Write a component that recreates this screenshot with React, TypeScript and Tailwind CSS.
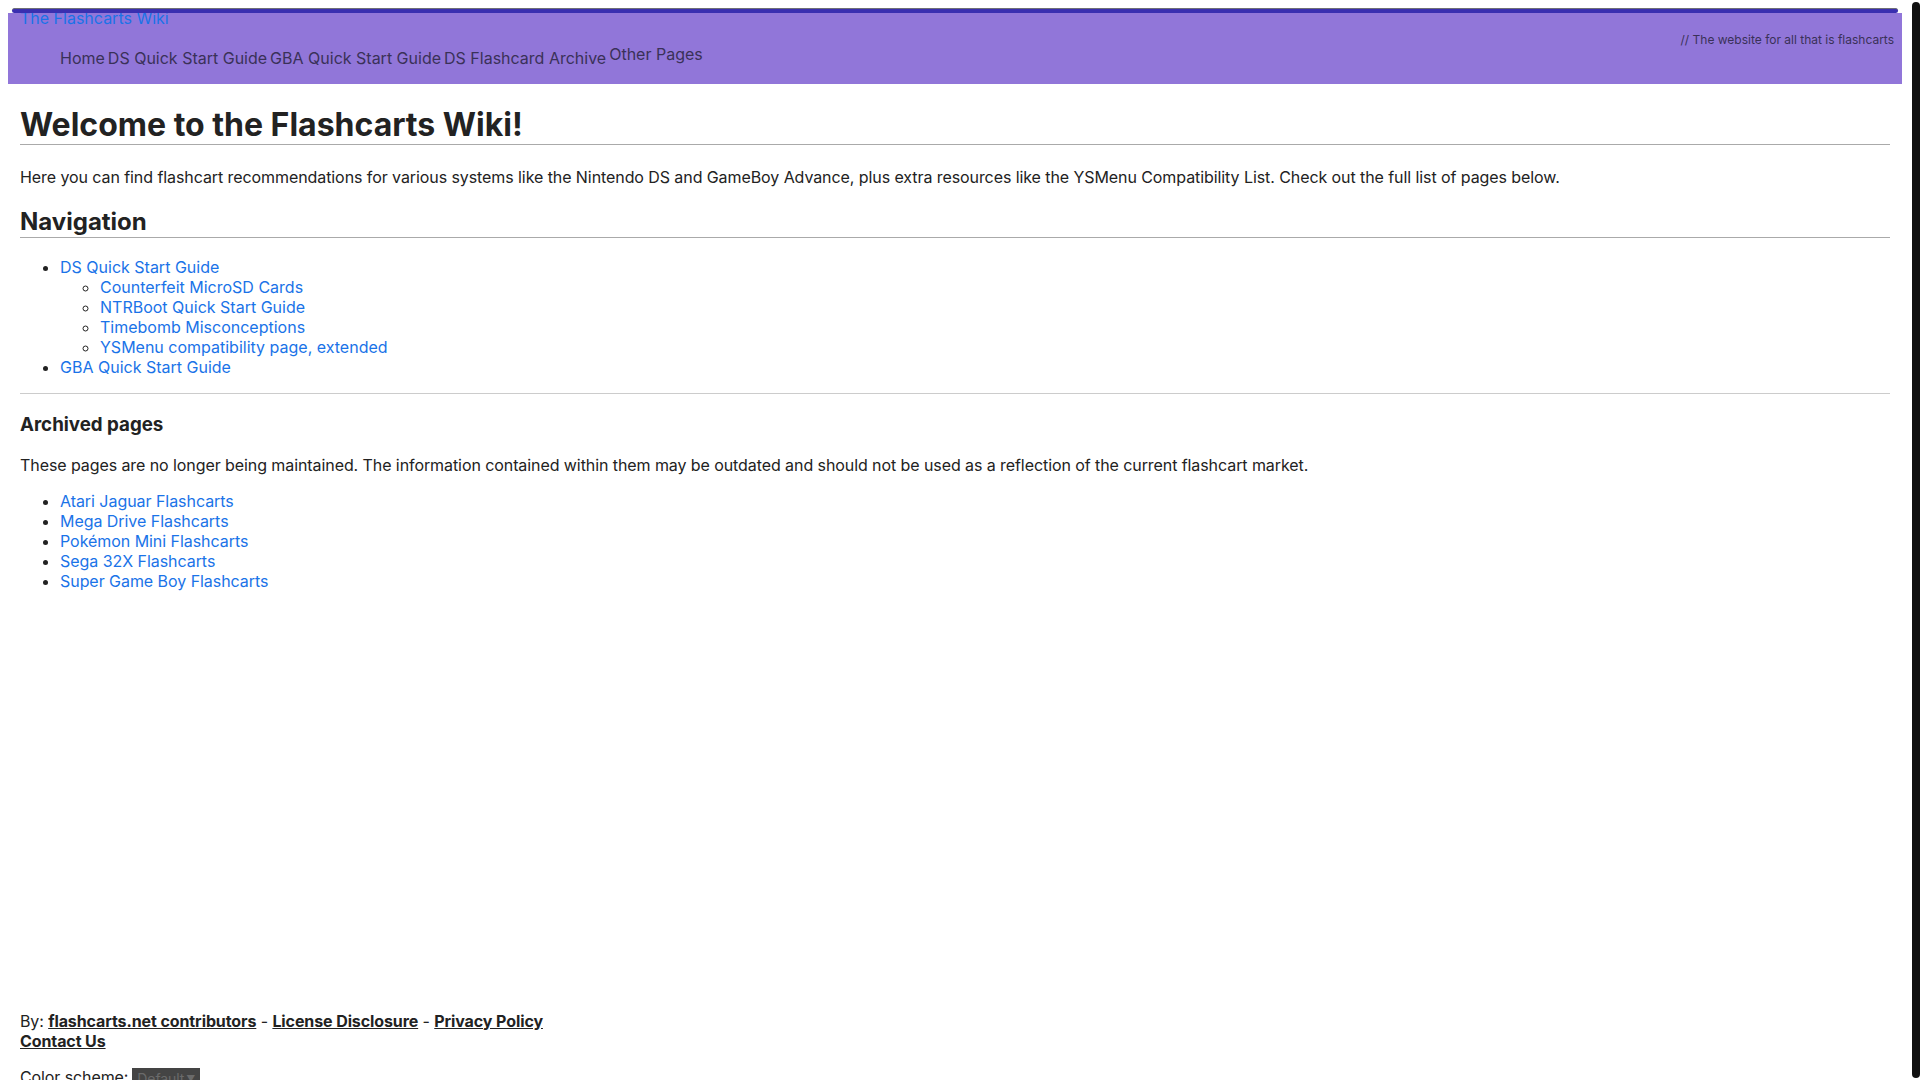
const navLinks = ['Home', 'DS Quick Start Guide', 'GBA Quick Start Guide', 'DS Flashcard Archive'];

const dsPages = [
  'Counterfeit MicroSD Cards',
  'NTRBoot Quick Start Guide',
  'Timebomb Misconceptions',
  'YSMenu compatibility page, extended',
];

const archived = [
  'Atari Jaguar Flashcarts',
  'Mega Drive Flashcarts',
  'Pokémon Mini Flashcarts',
  'Sega 32X Flashcarts',
  'Super Game Boy Flashcarts',
];

function Header() {
  return (
    <header className="ml-2 mr-[10px] mt-2">
      <div className="relative z-10 mx-1 h-[5px] rounded-[3px] border-t border-[#6f6f78] bg-[#3a2fb0]" />
      <div className="flex h-[71px] flex-col bg-[#9176d9] pl-3 pr-2">
        <a href="#" className="-mt-[5px] block text-[16px] leading-5 text-[#1a73e8]">
          The Flashcarts Wiki
        </a>
        <p className="mt-1 text-right text-[12px] leading-4 text-[#3a3158]">
          {'// The website for all that is flashcarts'}
        </p>
        <ul className="-mt-1 flex items-end gap-[3px] pl-10 text-[16px] leading-5 text-[#3a3158]">
          {navLinks.map((l) => (
            <li key={l}>{l}</li>
          ))}
          <li className="mb-1">Other Pages</li>
        </ul>
      </div>
    </header>
  );
}

function Link({ children }: { children: React.ReactNode }) {
  return (
    <a href="#" className="text-[#1a73e8]">
      {children}
    </a>
  );
}

export default function App() {
  return (
    <div
      className="flex h-screen items-start overflow-hidden bg-white text-[16px] text-[#222]"
      style={{ fontFamily: 'Inter, "Noto Sans", sans-serif' }}
    >
      <div className="min-w-0 flex-1">
        <Header />

        <main className="pl-5 pr-[22px]">
          <h1 className="mt-[22px] border-b border-[#aaa] text-[32px] font-bold leading-[1.2]">
            Welcome to the Flashcarts Wiki!
          </h1>
          <p className="mt-[22px] leading-5 tracking-[-0.08px]">
            Here you can find flashcart recommendations for various systems like the Nintendo DS and GameBoy
            Advance, plus extra resources like the YSMenu Compatibility List. Check out the full list of pages
            below.
          </p>

          <h2 className="mt-[21px] border-b border-[#aaa] text-[24px] font-bold leading-[1.2]">Navigation</h2>
          <ul className="mt-[19px] list-disc pl-10 leading-5">
            <li>
              <Link>DS Quick Start Guide</Link>
              <ul className="list-[circle] pl-10">
                {dsPages.map((p) => (
                  <li key={p}>
                    <Link>{p}</Link>
                  </li>
                ))}
              </ul>
            </li>
            <li>
              <Link>GBA Quick Start Guide</Link>
            </li>
          </ul>

          <hr className="mt-4 border-[#ccc]" />

          <h3 className="mt-5 text-[18.72px] font-bold leading-[1.2]">Archived pages</h3>
          <p className="mt-[18px] leading-5 tracking-[-0.08px]">
            These pages are no longer being maintained. The information contained within them may be outdated
            and should not be used as a reflection of the current flashcart market.
          </p>
          <ul className="mt-4 list-disc pl-10 leading-5 tracking-[-0.05px]">
            {archived.map((p) => (
              <li key={p}>
                <Link>{p}</Link>
              </li>
            ))}
          </ul>
        </main>

        <footer className="mt-[420px] pl-5 leading-5 tracking-[-0.1px]">
          <div>
            By: <a href="#" className="font-bold underline">flashcarts.net contributors</a> -{' '}
            <a href="#" className="font-bold underline">License Disclosure</a> -{' '}
            <a href="#" className="font-bold underline">Privacy Policy</a>
          </div>
          <div>
            <a href="#" className="font-bold underline">Contact Us</a>
          </div>
          <div className="mt-4 flex items-start gap-1">
            <span>Color scheme:</span>
            <span className="mt-[1px] flex h-[22px] items-center gap-[2px] bg-[#444] px-[5px] text-[14px] text-[#6a6a6a]">
              Default <span className="text-[9px]">▼</span>
            </span>
          </div>
        </footer>
      </div>

      <div className="w-2 shrink-0">
        <div className="mt-[2px] h-[1076px] rounded-full bg-[#111]" />
      </div>
    </div>
  );
}
